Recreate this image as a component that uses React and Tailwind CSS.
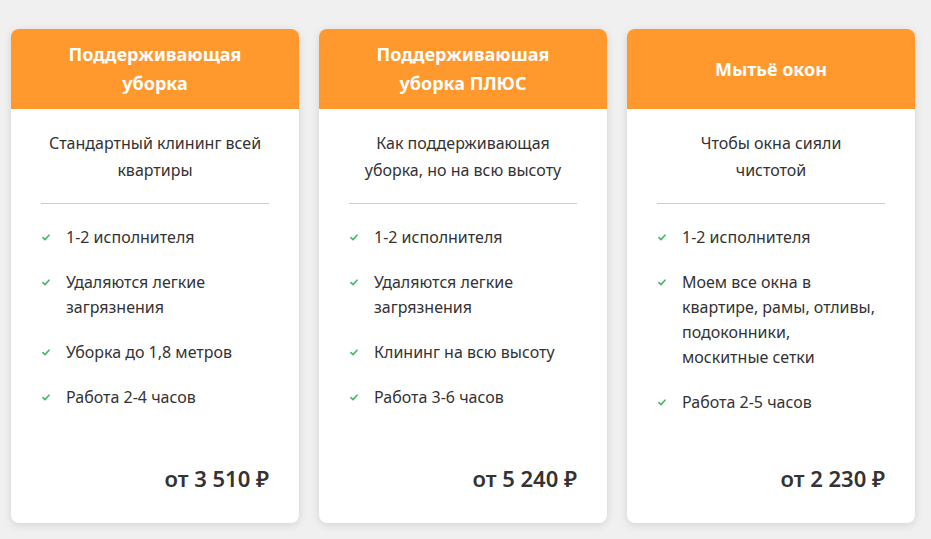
import React from 'react';

const plans = [
  {
    title: ['Поддерживающая', 'уборка'],
    desc: ['Стандартный клининг всей', 'квартиры'],
    items: [['1-2 исполнителя'], ['Удаляются легкие', 'загрязнения'], ['Уборка до 1,8 метров'], ['Работа 2-4 часов']],
    price: 'от 3 510 ₽',
  },
  {
    title: ['Поддерживаюшая', 'уборка ПЛЮС'],
    desc: ['Как поддерживающая', 'уборка, но на всю высоту'],
    items: [['1-2 исполнителя'], ['Удаляются легкие', 'загрязнения'], ['Клининг на всю высоту'], ['Работа 3-6 часов']],
    price: 'от 5 240 ₽',
  },
  {
    title: ['Мытьё окон'],
    desc: ['Чтобы окна сияли', 'чистотой'],
    items: [
      ['1-2 исполнителя'],
      ['Моем все окна в', 'квартире, рамы, отливы,', 'подоконники,', 'москитные сетки'],
      ['Работа 2-5 часов'],
    ],
    price: 'от 2 230 ₽',
  },
];

const Check = () => (
  <svg width="8" height="7" viewBox="0 0 8 7" className="mt-[9px] shrink-0">
    <path d="M1 3.6 L3 5.6 L7 1.2" fill="none" stroke="#4cb86a" strokeWidth="1.7" strokeLinecap="round" strokeLinejoin="round" />
  </svg>
);

const Card = ({ plan }) => (
  <div className="w-[288px] h-[494px] bg-white rounded-lg shadow-[0_2px_8px_rgba(0,0,0,0.12)] flex flex-col overflow-hidden">
    <div className="h-[80px] bg-[#ff982d] flex flex-col items-center justify-center text-white font-bold text-[18px] leading-[29px] text-center">
      {plan.title.map((t) => (
        <div key={t}>{t}</div>
      ))}
    </div>
    <div className="flex-1 flex flex-col px-[30px] pt-[21px] pb-[31px]">
      <div className="text-center text-[16px] leading-[27px] text-[#333]">
        {plan.desc.map((d) => (
          <div key={d}>{d}</div>
        ))}
      </div>
      <div className="h-px bg-[#ccc] mt-[19px] mb-[21px]" />
      <ul className="flex flex-col gap-[20px]">
        {plan.items.map((it) => (
          <li key={it[0]} className="flex gap-[16px] pl-[1px] text-[16px] leading-[25px] text-[#333]">
            <Check />
            <span>
              {it.map((l) => (
                <span key={l} className="block whitespace-nowrap">{l}</span>
              ))}
            </span>
          </li>
        ))}
      </ul>
      <div className="mt-auto text-right text-[22px] font-semibold text-[#333] leading-[28px]">{plan.price}</div>
    </div>
  </div>
);

export default function App() {
  return (
    <div className="min-h-[539px] bg-[#f0f0f0] px-[11px] pt-[29px] flex gap-[20px]" style={{ fontFamily: '"Noto Sans", "Open Sans", sans-serif' }}>
      {plans.map((p) => (
        <Card key={p.price} plan={p} />
      ))}
    </div>
  );
}
